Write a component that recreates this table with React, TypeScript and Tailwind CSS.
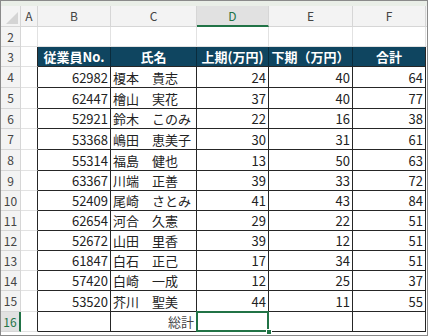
import React from 'react';

// 従業員の上期・下期データ
const rows = [
  { no: 62982, name: '榎本　貴志', h1: 24, h2: 40, total: 64 },
  { no: 62447, name: '檜山　実花', h1: 37, h2: 40, total: 77 },
  { no: 52921, name: '鈴木　このみ', h1: 22, h2: 16, total: 38 },
  { no: 53368, name: '嶋田　恵美子', h1: 30, h2: 31, total: 61 },
  { no: 55314, name: '福島　健也', h1: 13, h2: 50, total: 63 },
  { no: 63367, name: '川端　正善', h1: 39, h2: 33, total: 72 },
  { no: 52409, name: '尾崎　さとみ', h1: 41, h2: 43, total: 84 },
  { no: 62654, name: '河合　久憲', h1: 29, h2: 22, total: 51 },
  { no: 52672, name: '山田　里香', h1: 39, h2: 12, total: 51 },
  { no: 61847, name: '白石　正己', h1: 17, h2: 34, total: 51 },
  { no: 57420, name: '白崎　一成', h1: 12, h2: 25, total: 37 },
  { no: 53520, name: '芥川　聖美', h1: 44, h2: 11, total: 55 },
];

// 行の高さ (Excel の表示倍率で 20〜21px)
const heights = ['h-[21px]', 'h-[21px]', 'h-[20px]', 'h-[21px]', 'h-[21px]', 'h-[20px]', 'h-[20px]', 'h-[20px]', 'h-[20px]', 'h-[20px]', 'h-[20px]', 'h-[21px]'];

const rowHdr = 'w-[20px] shrink-0 flex items-center justify-center bg-[#f3f3f3] border-r border-b border-[#d6d6d6] text-[12px] text-[#444]';
const colA = 'w-[17px] shrink-0 border-b border-b-[#e2e2e2] border-r border-r-[#262626]';
const cell = 'shrink-0 flex items-center border-r border-b border-[#262626] text-[13px] text-[#222]';

function ColHeader() {
  const letters = [
    { l: 'A', w: 'w-[17px]' },
    { l: 'B', w: 'w-[73px]' },
    { l: 'C', w: 'w-[86px]' },
  ];
  return (
    <div className="flex h-[21px]">
      <div className="w-[20px] shrink-0 bg-[#f3f3f3] border-r border-b border-[#d6d6d6] flex items-end justify-end pr-[2px] pb-[2px]">
        <svg width="12" height="12" viewBox="0 0 12 12">
          <polygon points="12,0 12,12 0,12" fill="#d4d4d4" />
        </svg>
      </div>
      {letters.map((c) => (
        <div key={c.l} className={`${c.w} shrink-0 bg-[#f3f3f3] border-r border-b border-[#d6d6d6] flex items-center justify-center text-[12px] text-[#444]`}>
          {c.l}
        </div>
      ))}
      <div className="w-[72px] shrink-0 bg-[#e1e1e1] border-r border-r-[#d6d6d6] border-b-2 border-b-[#217346] flex items-center justify-center text-[12px] text-[#217346]">
        D
      </div>
      <div className="w-[84px] shrink-0 bg-[#f3f3f3] border-r border-b border-[#d6d6d6] flex items-center justify-center text-[12px] text-[#444]">
        E
      </div>
      <div className="w-[73px] shrink-0 bg-[#f3f3f3] border-r border-b border-[#d6d6d6] flex items-center justify-center text-[12px] text-[#444]">
        F
      </div>
      <div className="flex-1 bg-[#f3f3f3] border-b border-[#d6d6d6]" />
    </div>
  );
}

export default function App() {
  const hdrCell = 'shrink-0 flex items-center justify-center bg-[#0f4560] border-r border-r-[#0a2c3d] border-b border-b-[#262626] text-white text-[13px] font-bold';
  return (
    <div className="w-[428px] h-[336px] overflow-hidden bg-white border border-[#8a8a8a] flex flex-col font-['Noto_Sans_CJK_JP','Noto_Sans',sans-serif] leading-none">
      <div className="h-[5px] shrink-0 bg-[#e9eee7]" />
      <ColHeader />

      {/* 2行目 */}
      <div className="flex h-[20px] shrink-0">
        <div className={rowHdr}>2</div>
        <div className="w-[17px] shrink-0 border-r border-b border-[#e2e2e2]" />
        <div className="w-[73px] shrink-0 border-r border-b border-[#e2e2e2]" />
        <div className="w-[86px] shrink-0 border-r border-b border-[#e2e2e2]" />
        <div className="w-[72px] shrink-0 border-r border-b border-[#e2e2e2]" />
        <div className="w-[84px] shrink-0 border-r border-b border-[#e2e2e2]" />
        <div className="w-[73px] shrink-0 border-r border-b border-[#e2e2e2]" />
        <div className="flex-1 border-b border-[#e2e2e2]" />
      </div>

      {/* 見出し */}
      <div className="flex h-[20px] shrink-0">
        <div className={rowHdr}>3</div>
        <div className={colA} />
        <div className={`${hdrCell} w-[73px]`}>従業員No.</div>
        <div className={`${hdrCell} w-[86px]`}>氏名</div>
        <div className={`${hdrCell} w-[72px]`}>上期(万円)</div>
        <div className={`${hdrCell} w-[84px]`}>下期（万円）</div>
        <div className={`${hdrCell} w-[73px] border-r-[#262626]`}>合計</div>
      </div>

      {rows.map((r, i) => (
        <div key={r.no} className={`flex shrink-0 ${heights[i]}`}>
          <div className={rowHdr}>{i + 4}</div>
          <div className={colA} />
          <div className={`${cell} w-[73px] justify-end pr-[2px]`}>{r.no}</div>
          <div className={`${cell} w-[86px] pl-[2px]`}>{r.name}</div>
          <div className={`${cell} w-[72px] justify-end pr-[2px]`}>{r.h1}</div>
          <div className={`${cell} w-[84px] justify-end pr-[2px]`}>{r.h2}</div>
          <div className={`${cell} w-[73px] justify-end pr-[2px]`}>{r.total}</div>
        </div>
      ))}

      {/* 総計 */}
      <div className="flex h-[20px] shrink-0">
        <div className="w-[20px] shrink-0 flex items-center justify-center bg-[#e1e1e1] border-b border-[#d6d6d6] border-r-2 border-r-[#217346] text-[12px] text-[#217346]">16</div>
        <div className={colA} />
        <div className={`${cell} w-[73px]`} />
        <div className={`${cell} w-[86px] justify-end pr-[2px] text-[#444]`}>総計</div>
        <div className={`${cell} w-[72px] relative`}>
          <div className="absolute -left-[1px] -top-[1px] w-[73px] h-[21px] border-2 border-[#217346]" />
          <div className="absolute -right-[4px] -bottom-[4px] w-[6px] h-[6px] bg-[#217346] border border-white" />
        </div>
        <div className={`${cell} w-[84px]`} />
        <div className={`${cell} w-[73px]`} />
      </div>
      <div className="flex-1" />
    </div>
  );
}
